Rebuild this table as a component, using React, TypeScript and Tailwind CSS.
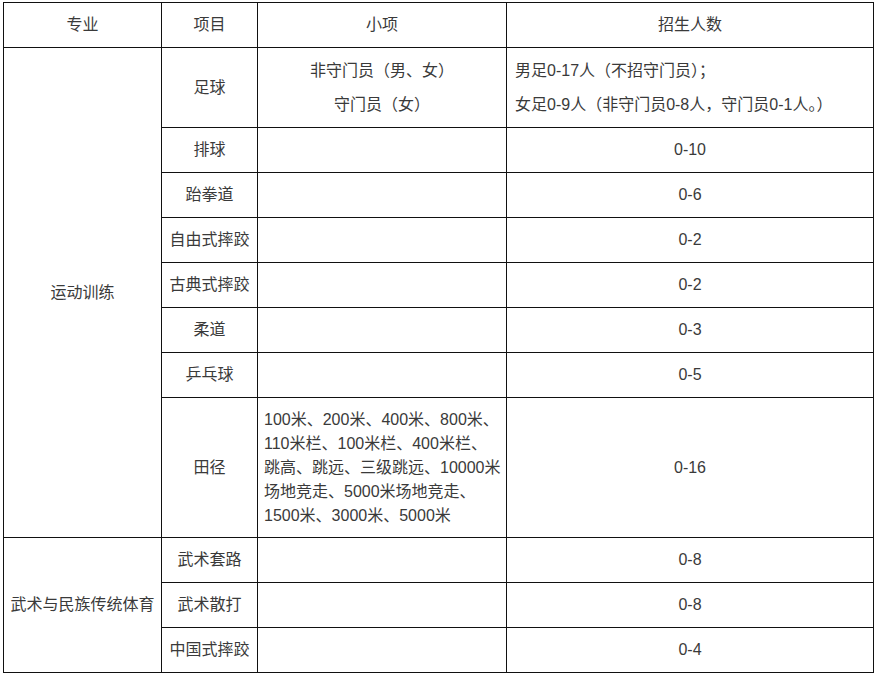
const rows = [
  { item: "排球", count: "0-10" },
  { item: "跆拳道", count: "0-6" },
  { item: "自由式摔跤", count: "0-2" },
  { item: "古典式摔跤", count: "0-2" },
  { item: "柔道", count: "0-3" },
  { item: "乒乓球", count: "0-5" },
];

const wushu = [
  { item: "武术套路", count: "0-8" },
  { item: "武术散打", count: "0-8" },
  { item: "中国式摔跤", count: "0-4" },
];

const track = [
  "100米、200米、400米、800米、",
  "110米栏、100米栏、400米栏、",
  "跳高、跳远、三级跳远、10000米",
  "场地竞走、5000米场地竞走、",
  "1500米、3000米、5000米",
];

const cell = "border border-[#111] px-[6px] align-middle whitespace-nowrap";

export default function App() {
  return (
    <div
      className="min-h-screen bg-white pl-[3px] pt-[2px] text-[16px] leading-6 text-[#3a3a3a]"
      style={{ fontFamily: '"Liberation Sans", "Noto Sans CJK SC", sans-serif' }}
    >
      <table className="table-fixed border-collapse w-[870px]">
        <colgroup>
          <col className="w-[158px]" />
          <col className="w-[96px]" />
          <col className="w-[249px]" />
          <col className="w-[367px]" />
        </colgroup>
        <tbody>
          <tr className="h-[45px] text-center">
            <td className={cell}>专业</td>
            <td className={cell}>项目</td>
            <td className={cell}>小项</td>
            <td className={cell}>招生人数</td>
          </tr>
          <tr className="h-[80px]">
            <td className={`${cell} text-center`} rowSpan={8}>运动训练</td>
            <td className={`${cell} text-center`}>足球</td>
            <td className={`${cell} text-center`}>
              <div className="flex flex-col gap-[10px]">
                <p>非守门员（男、女）</p>
                <p>守门员（女）</p>
              </div>
            </td>
            <td className={`${cell} pl-2`}>
              <div className="flex flex-col gap-[10px]">
                <p>男足0-17人（不招守门员）；</p>
                <p>女足0-9人（非守门员0-8人，守门员0-1人。）</p>
              </div>
            </td>
          </tr>
          {rows.map((r) => (
            <tr key={r.item} className="h-[45px] text-center">
              <td className={cell}>{r.item}</td>
              <td className={cell}></td>
              <td className={cell}>{r.count}</td>
            </tr>
          ))}
          <tr className="h-[140px]">
            <td className={`${cell} text-center`}>田径</td>
            <td className={`${cell} text-left`}>
              {track.map((line) => (
                <div key={line}>{line}</div>
              ))}
            </td>
            <td className={`${cell} text-center`}>0-16</td>
          </tr>
          {wushu.map((r, i) => (
            <tr key={r.item} className="h-[45px] text-center">
              {i === 0 && (
                <td className={cell} rowSpan={3}>
                  武术与民族传统体育
                </td>
              )}
              <td className={cell}>{r.item}</td>
              <td className={cell}></td>
              <td className={cell}>{r.count}</td>
            </tr>
          ))}
        </tbody>
      </table>
    </div>
  );
}
